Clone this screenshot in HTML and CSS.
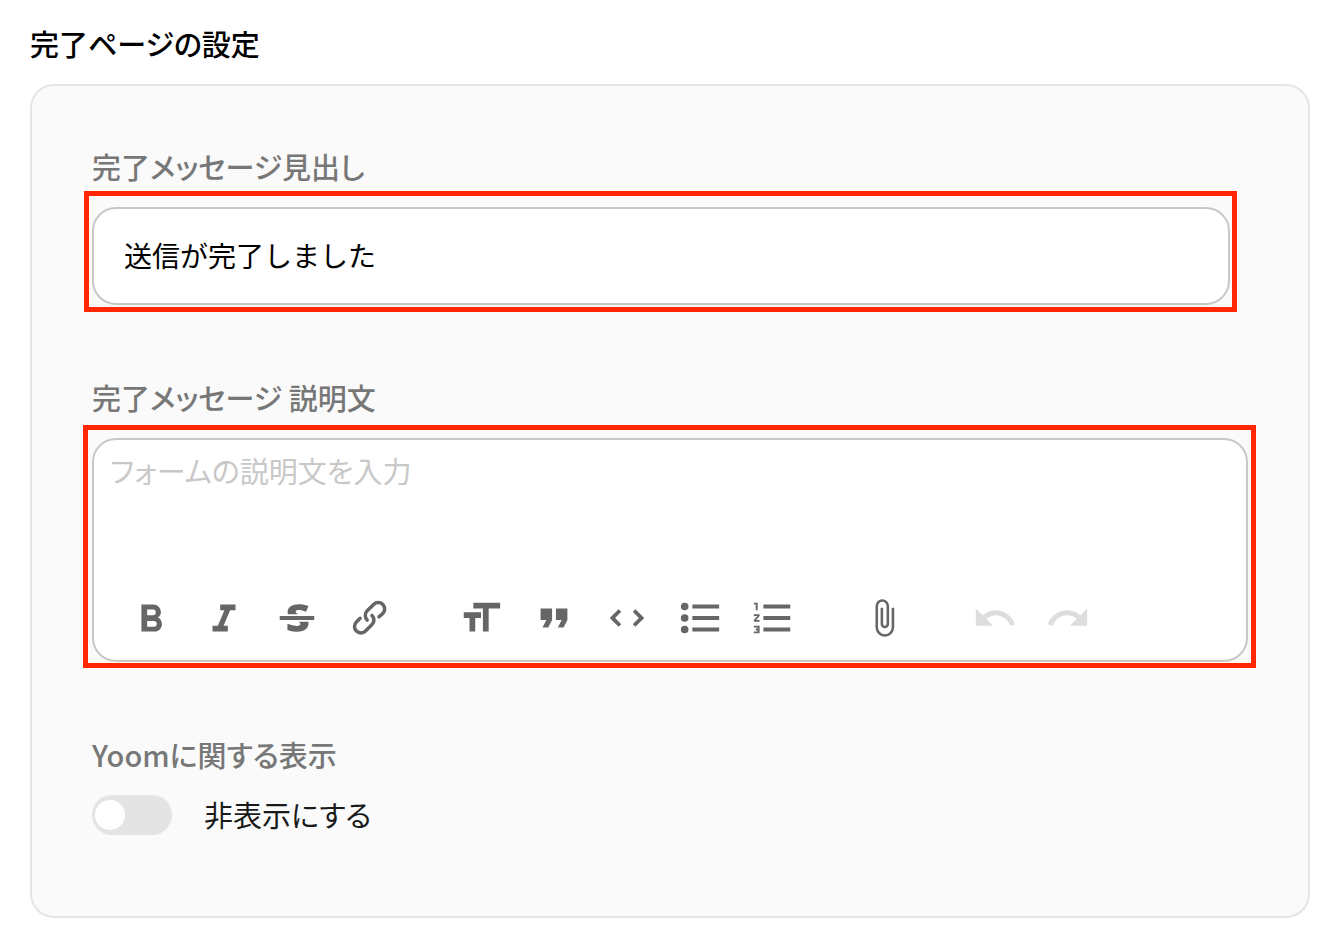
FILE: index.html
```html
<!DOCTYPE html>
<html lang="ja">
<head>
  <meta charset="UTF-8" />
  <meta name="viewport" content="width=device-width, initial-scale=1" />
  <title>完了ページの設定</title>
  <link rel="stylesheet" href="styles.css">
</head>
<body>

  <h1 class="title">完了ページの設定</h1>

  <form class="card">
    <div class="field">
      <label class="label" for="heading">完了メッセージ見出し</label>
      <div class="input-box marked">
        <input id="heading" class="input" type="text" value="送信が完了しました" />
      </div>
    </div>

    <div class="field">
      <label class="label" for="description">完了メッセージ 説明文</label>
      <div class="editor-box marked">
        <div class="editor">
          <textarea id="description" class="editor-text" placeholder="フォームの説明文を入力"></textarea>

          <div class="toolbar">
            <div class="tools">
              <button type="button" class="tool" aria-label="太字">
                <svg viewBox="0 0 24 24"><path d="M15.6 11.8c1-.7 1.6-1.8 1.6-2.8a4 4 0 0 0-4-4H7v14h7c2.1 0 3.7-1.7 3.7-3.8 0-1.5-.8-2.8-2.1-3.4zM10 7.5h3a1.5 1.5 0 1 1 0 3h-3v-3zm3.5 9H10v-3h3.5a1.5 1.5 0 1 1 0 3z"/></svg>
              </button>
              <button type="button" class="tool" aria-label="斜体">
                <svg viewBox="0 0 24 24"><path d="M10 5v3h2.2l-3.4 8H6v3h8v-3h-2.2l3.4-8H18V5h-8z"/></svg>
              </button>
              <button type="button" class="tool" aria-label="取り消し線">
                <svg viewBox="0 0 24 24"><path d="M12.73 14l.28.14c.26.15.45.3.57.44.12.14.18.3.18.5 0 .3-.15.56-.44.75-.3.2-.76.3-1.39.3A13.52 13.52 0 0 1 7 14.95v3.37a10.64 10.64 0 0 0 4.84.88c1.26 0 2.35-.19 3.28-.56.93-.37 1.64-.9 2.14-1.57s.74-1.45.74-2.32c0-.26-.02-.51-.06-.75h-5.21zm-5.5-4c-.08-.34-.12-.7-.12-1.1 0-1.29.52-2.3 1.58-3.02 1.05-.72 2.5-1.08 4.34-1.08 1.62 0 3.28.34 4.97 1l-1.3 2.93c-1.47-.6-2.73-.9-3.8-.9-.55 0-.96.08-1.2.26-.26.17-.38.38-.38.64 0 .27.16.52.48.74.17.12.53.3 1.05.53H7.23zM3 13h18v-2H3v2z"/></svg>
              </button>
              <button type="button" class="tool" aria-label="リンク">
                <svg viewBox="0 0 24 24"><path d="M9.88 13.7a4.3 4.3 0 0 1 0-6.07l3.37-3.37a4.26 4.26 0 0 1 6.07 0 4.3 4.3 0 0 1 0 6.06l-1.96 1.72a.91.91 0 1 1-1.3-1.3l1.97-1.71a2.46 2.46 0 0 0-3.48-3.48l-3.38 3.37a2.46 2.46 0 0 0 0 3.48.91.91 0 1 1-1.3 1.3z"/><path d="M4.25 19.46a4.3 4.3 0 0 1 0-6.07l1.93-1.9a.91.91 0 1 1 1.3 1.3l-1.93 1.9a2.46 2.46 0 0 0 3.48 3.48l3.37-3.38c.96-.96.96-2.52 0-3.48a.91.91 0 1 1 1.3-1.3 4.3 4.3 0 0 1 0 6.07l-3.38 3.38a4.26 4.26 0 0 1-6.07 0z"/></svg>
              </button>
            </div>

            <div class="tools">
              <button type="button" class="tool" aria-label="見出し">
                <svg viewBox="0 0 24 24"><path d="M12 9v3H9v7H6v-7H3V9h9zM8 4h14v3h-6v12h-3V7H8V4z"/></svg>
              </button>
              <button type="button" class="tool" aria-label="引用">
                <svg viewBox="0 0 24 24"><path d="M6 17h3l2-4V7H5v6h3l-2 4zm8 0h3l2-4V7h-6v6h3l-2 4z"/></svg>
              </button>
              <button type="button" class="tool" aria-label="コード">
                <svg viewBox="0 0 24 24"><path d="M18.2 12L15 15.2l1.4 1.4L21 12l-4.6-4.6L15 8.8l3.2 3.2zM5.8 12L9 8.8 7.6 7.4 3 12l4.6 4.6L9 15.2 5.8 12z"/></svg>
              </button>
              <button type="button" class="tool" aria-label="箇条書き">
                <svg viewBox="0 0 24 24"><path d="M4 4a2 2 0 1 0 0 4 2 2 0 0 0 0-4zm0 6a2 2 0 1 0 0 4 2 2 0 0 0 0-4zm0 6a2 2 0 1 0 0 4 2 2 0 0 0 0-4zm4 3h14v-2H8v2zm0-6h14v-2H8v2zm0-8v2h14V5H8z"/></svg>
              </button>
              <button type="button" class="tool" aria-label="番号付きリスト">
                <svg viewBox="0 0 24 24"><path d="M2 17h2v.5H3v1h1v.5H2v1h3v-4H2v1zm1-9h1V4H2v1h1v3zm-1 3h1.8L2 13.1v.9h3v-1H3.2L5 10.9V10H2v1zm5-6v2h14V5H7zm0 14h14v-2H7v2zm0-6h14v-2H7v2z"/></svg>
              </button>
            </div>

            <div class="tools">
              <button type="button" class="tool" aria-label="ファイルを添付">
                <svg viewBox="-1.5 -1.5 27 27"><path d="M16.5 6v11.5a4 4 0 1 1-8 0V5a2.5 2.5 0 0 1 5 0v10.5a1 1 0 1 1-2 0V6H10v9.5a2.5 2.5 0 0 0 5 0V5a4 4 0 1 0-8 0v12.5a5.5 5.5 0 0 0 11 0V6h-1.5z"/></svg>
              </button>
            </div>

            <div class="tools">
              <button type="button" class="tool" aria-label="元に戻す" disabled>
                <svg viewBox="0 0 24 24"><path d="M12.5 8c-2.6 0-5 1-6.9 2.6L2 7v9h9l-3.6-3.6A8 8 0 0 1 20 16l2.4-.8a10.5 10.5 0 0 0-10-7.2z"/></svg>
              </button>
              <button type="button" class="tool" aria-label="やり直す" disabled>
                <svg viewBox="0 0 24 24"><path d="M18.4 10.6a10.5 10.5 0 0 0-16.9 4.6L4 16a8 8 0 0 1 12.7-3.6L13 16h9V7l-3.6 3.6z"/></svg>
              </button>
            </div>
          </div>
        </div>
      </div>
    </div>

    <div class="field">
      <h2 class="label">Yoomに関する表示</h2>
      <label class="switch-row">
        <input class="switch" type="checkbox" />
        <span class="switch-text">非表示にする</span>
      </label>
    </div>
  </form>

</body>
</html>
```
FILE: styles.css
```css
* {
  box-sizing: border-box;
}

body {
  margin: 0;
  padding: 22px 20px 22px 30px;
  background: #fff;
  color: #000;
  font-family: "Noto Sans CJK JP", sans-serif;
  font-size: 28px;
  line-height: 42px;
}

.title {
  margin: 0 0 20px;
  font-size: 29px;
  font-weight: 500;
  font-feature-settings: "palt";
}

.card {
  display: flex;
  flex-direction: column;
  gap: 71px;
  padding: 59px 60px 81px;
  background: #fafafa;
  border: 2px solid #e5e5e5;
  border-radius: 24px;
}

.field {
  display: flex;
  flex-direction: column;
  gap: 20px;
}

.label {
  margin: 0;
  color: #777;
  font-size: 29px;
  font-weight: 500;
  font-feature-settings: "palt";
}

/* red frame around a field */
.marked {
  position: relative;
}

.marked::after {
  content: "";
  position: absolute;
  inset: -16px -7px -7px -8px;
  border: 5px solid #ff2600;
  pointer-events: none;
}

.editor-box::after {
  inset: -13px -8px -6px -9px;
}

.input-box {
  display: flex;
  margin-right: 18px;
}

.input {
  width: 100%;
  height: 98px;
  padding: 0 30px 2px;
  background: #fff;
  border: 2px solid #c8c8c8;
  border-radius: 24px;
  color: #000;
  font: inherit;
  outline: none;
}

.editor {
  display: flex;
  flex-direction: column;
  background: #fff;
  border: 2px solid #c8c8c8;
  border-radius: 24px;
  overflow: hidden;
}

.editor-text {
  height: 155px;
  padding: 9px 16px;
  background: none;
  border: none;
  color: #000;
  font: inherit;
  font-size: 29px;
  line-height: 42px;
  font-feature-settings: "palt";
  resize: none;
  outline: none;
}

.editor-text::placeholder {
  color: #c8c8c8;
}

.toolbar {
  display: flex;
  flex-wrap: wrap;
  column-gap: 38px;
  padding: 0 20px 19px;
}

.tools {
  display: flex;
}

.tool {
  display: flex;
  justify-content: center;
  width: 73px;
  height: 46px;
  padding: 0;
  background: none;
  border: none;
  color: #666;
  cursor: pointer;
}

.tool:disabled {
  color: #ddd;
  cursor: default;
}

.tool svg {
  width: 46px;
  height: 46px;
  fill: currentColor;
}

.switch-row {
  display: flex;
  align-items: center;
  gap: 32px;
  height: 40px;
  color: #1a1a1a;
  font-size: 29px;
  font-feature-settings: "palt";
  cursor: pointer;
}

.switch-text {
  padding-bottom: 2px;
}

.switch {
  appearance: none;
  display: flex;
  align-items: center;
  width: 80px;
  height: 40px;
  margin: 0;
  padding: 0 3px;
  background: #e4e4e4;
  border-radius: 20px;
  cursor: pointer;
}

.switch::before {
  content: "";
  width: 30px;
  height: 30px;
  background: #fff;
  border-radius: 50%;
}

.switch:checked {
  justify-content: flex-end;
  background: #4a90e2;
}
```
